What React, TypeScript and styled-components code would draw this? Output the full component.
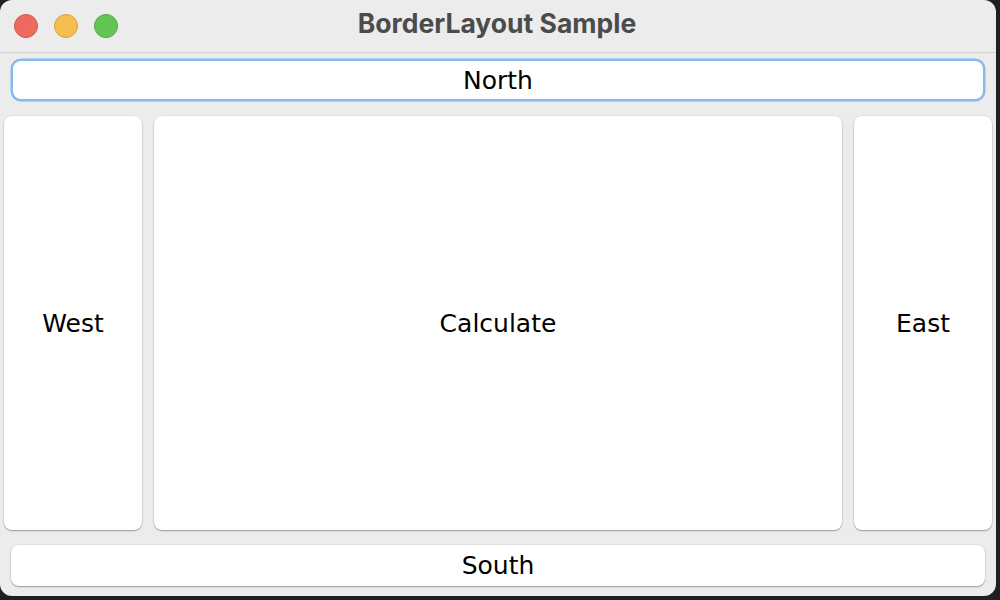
import React from "react";
import styled, { createGlobalStyle } from "styled-components";

const Global = createGlobalStyle`
  html, body {
    margin: 0;
    padding: 0;
    background: #1e1f21;
    width: 1000px;
    height: 600px;
    overflow: hidden;
  }
`;

const Window = styled.div`
  width: 996px;
  height: 596px;
  background: #ececec;
  border-radius: 12px;
  overflow: hidden;
  display: flex;
  flex-direction: column;
  box-sizing: border-box;
`;

const TitleBar = styled.div`
  height: 52px;
  flex: none;
  display: flex;
  align-items: center;
  border-bottom: 1px solid #d3d3d3;
`;

const Lights = styled.div`
  display: flex;
  gap: 16px;
  padding-left: 14px;
`;

const Light = styled.span<{ $fill: string; $edge: string }>`
  width: 24px;
  height: 24px;
  border-radius: 50%;
  box-sizing: border-box;
  background: ${(p) => p.$fill};
  border: 1px solid ${(p) => p.$edge};
`;

const Title = styled.div`
  flex: 1;
  text-align: center;
  margin-left: -120px;
  margin-top: -6px;
  font-family: Inter, "Liberation Sans", sans-serif;
  font-weight: 700;
  font-size: 26.5px;
  color: #4b4b4b;
`;

const Content = styled.div`
  flex: 1;
  display: flex;
  flex-direction: column;
  padding: 6px 4px 10px 4px;
  gap: 15px;
`;

const Edge = styled.div`
  padding: 0 7px;
`;

const Middle = styled.div`
  flex: 1;
  display: flex;
  gap: 12px;
`;

const Button = styled.button<{ $focused?: boolean; $width?: number }>`
  font-family: "DejaVu Sans", "Liberation Sans", sans-serif;
  font-size: 25px;
  color: #000;
  background: #fff;
  border: none;
  border-radius: 8px;
  margin: 0;
  padding: 0;
  cursor: default;
  box-shadow: 0 1px 1.5px rgba(0, 0, 0, 0.32), 0 0 0 0.5px rgba(0, 0, 0, 0.08);
  ${(p) => (p.$width ? `width: ${p.$width}px; flex: none;` : "flex: 1;")}
  ${(p) =>
    p.$focused &&
    `box-shadow: 0 0 0 2.5px #88b9ee, 0 1px 1px rgba(0,0,0,0.2);`}
`;

const BarButton = styled(Button)`
  width: 100%;
  height: 41px;
`;

const NorthButton = styled(BarButton)`
  margin: 2px 2px;
  width: calc(100% - 4px);
  height: 38px;
`;

export default function App() {
  return (
    <>
      <Global />
      <Window>
        <TitleBar>
          <Lights>
            <Light $fill="#ee6a5f" $edge="#d4554b" />
            <Light $fill="#f5be4f" $edge="#d9a13a" />
            <Light $fill="#62c554" $edge="#4ea83f" />
          </Lights>
          <Title>BorderLayout Sample</Title>
        </TitleBar>
        <Content>
          <Edge>
            <NorthButton $focused>North</NorthButton>
          </Edge>
          <Middle>
            <Button $width={138}>West</Button>
            <Button>Calculate</Button>
            <Button $width={138}>East</Button>
          </Middle>
          <Edge>
            <BarButton>South</BarButton>
          </Edge>
        </Content>
      </Window>
    </>
  );
}
